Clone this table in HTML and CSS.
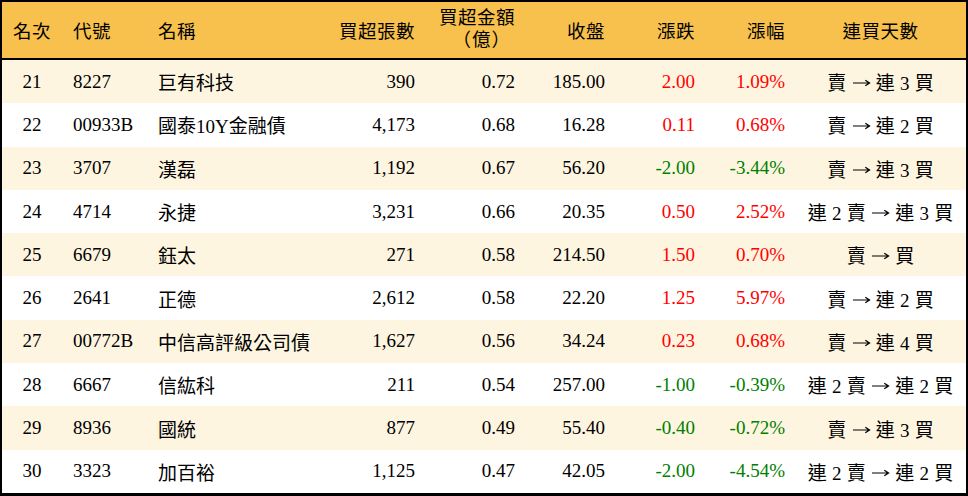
FILE: index.html
```html
<!DOCTYPE html>
<html lang="zh-Hant">
<head>
<meta charset="utf-8">
<link rel="stylesheet" href="styles.css">
</head>
<body>
<div class="table">
  <div class="row head">
    <div class="c c1">名次</div>
    <div class="c cl">代號</div>
    <div class="c cl">名稱</div>
    <div class="c cr">買超張數</div>
    <div class="c cr two"><span>買超金額</span><span class="paren">（億）</span></div>
    <div class="c cr">收盤</div>
    <div class="c cr">漲跌</div>
    <div class="c cr">漲幅</div>
    <div class="c cc">連買天數</div>
  </div>
  <div class="row alt">
    <div class="c c1">21</div><div class="c cl">8227</div><div class="c cl">巨有科技</div>
    <div class="c cr">390</div><div class="c cr">0.72</div><div class="c cr">185.00</div>
    <div class="c cr up">2.00</div><div class="c cr up">1.09%</div><div class="c cc">賣 <svg class="arr" viewBox="0 0 20 10"><path d="M1 5H18.5M14 2L18.5 5L14 8"/></svg> 連 3 買</div>
  </div>
  <div class="row">
    <div class="c c1">22</div><div class="c cl">00933B</div><div class="c cl">國泰10Y金融債</div>
    <div class="c cr">4,173</div><div class="c cr">0.68</div><div class="c cr">16.28</div>
    <div class="c cr up">0.11</div><div class="c cr up">0.68%</div><div class="c cc">賣 <svg class="arr" viewBox="0 0 20 10"><path d="M1 5H18.5M14 2L18.5 5L14 8"/></svg> 連 2 買</div>
  </div>
  <div class="row alt">
    <div class="c c1">23</div><div class="c cl">3707</div><div class="c cl">漢磊</div>
    <div class="c cr">1,192</div><div class="c cr">0.67</div><div class="c cr">56.20</div>
    <div class="c cr down">-2.00</div><div class="c cr down">-3.44%</div><div class="c cc">賣 <svg class="arr" viewBox="0 0 20 10"><path d="M1 5H18.5M14 2L18.5 5L14 8"/></svg> 連 3 買</div>
  </div>
  <div class="row">
    <div class="c c1">24</div><div class="c cl">4714</div><div class="c cl">永捷</div>
    <div class="c cr">3,231</div><div class="c cr">0.66</div><div class="c cr">20.35</div>
    <div class="c cr up">0.50</div><div class="c cr up">2.52%</div><div class="c cc">連 2 賣 <svg class="arr" viewBox="0 0 20 10"><path d="M1 5H18.5M14 2L18.5 5L14 8"/></svg> 連 3 買</div>
  </div>
  <div class="row alt">
    <div class="c c1">25</div><div class="c cl">6679</div><div class="c cl">鈺太</div>
    <div class="c cr">271</div><div class="c cr">0.58</div><div class="c cr">214.50</div>
    <div class="c cr up">1.50</div><div class="c cr up">0.70%</div><div class="c cc">賣 <svg class="arr" viewBox="0 0 20 10"><path d="M1 5H18.5M14 2L18.5 5L14 8"/></svg> 買</div>
  </div>
  <div class="row">
    <div class="c c1">26</div><div class="c cl">2641</div><div class="c cl">正德</div>
    <div class="c cr">2,612</div><div class="c cr">0.58</div><div class="c cr">22.20</div>
    <div class="c cr up">1.25</div><div class="c cr up">5.97%</div><div class="c cc">賣 <svg class="arr" viewBox="0 0 20 10"><path d="M1 5H18.5M14 2L18.5 5L14 8"/></svg> 連 2 買</div>
  </div>
  <div class="row alt">
    <div class="c c1">27</div><div class="c cl">00772B</div><div class="c cl">中信高評級公司債</div>
    <div class="c cr">1,627</div><div class="c cr">0.56</div><div class="c cr">34.24</div>
    <div class="c cr up">0.23</div><div class="c cr up">0.68%</div><div class="c cc">賣 <svg class="arr" viewBox="0 0 20 10"><path d="M1 5H18.5M14 2L18.5 5L14 8"/></svg> 連 4 買</div>
  </div>
  <div class="row">
    <div class="c c1">28</div><div class="c cl">6667</div><div class="c cl">信紘科</div>
    <div class="c cr">211</div><div class="c cr">0.54</div><div class="c cr">257.00</div>
    <div class="c cr down">-1.00</div><div class="c cr down">-0.39%</div><div class="c cc">連 2 賣 <svg class="arr" viewBox="0 0 20 10"><path d="M1 5H18.5M14 2L18.5 5L14 8"/></svg> 連 2 買</div>
  </div>
  <div class="row alt">
    <div class="c c1">29</div><div class="c cl">8936</div><div class="c cl">國統</div>
    <div class="c cr">877</div><div class="c cr">0.49</div><div class="c cr">55.40</div>
    <div class="c cr down">-0.40</div><div class="c cr down">-0.72%</div><div class="c cc">賣 <svg class="arr" viewBox="0 0 20 10"><path d="M1 5H18.5M14 2L18.5 5L14 8"/></svg> 連 3 買</div>
  </div>
  <div class="row">
    <div class="c c1">30</div><div class="c cl">3323</div><div class="c cl">加百裕</div>
    <div class="c cr">1,125</div><div class="c cr">0.47</div><div class="c cr">42.05</div>
    <div class="c cr down">-2.00</div><div class="c cr down">-4.54%</div><div class="c cc">連 2 賣 <svg class="arr" viewBox="0 0 20 10"><path d="M1 5H18.5M14 2L18.5 5L14 8"/></svg> 連 2 買</div>
  </div>
</div>
</body>
</html>
```
FILE: styles.css
```css
html, body {
  margin: 0;
  padding: 0;
  background: #ffffff;
}
.table {
  width: 968px;
  height: 496px;
  box-sizing: border-box;
  border-style: solid;
  border-color: #000;
  border-width: 2px 2px 3px 2px;
  display: grid;
  grid-template-rows: 58px repeat(10, 1fr);
  font-family: "Liberation Serif", "Noto Sans CJK TC", serif;
  font-size: 19px;
  color: #000;
}
.row {
  display: grid;
  grid-template-columns: 60px 85px 185px 93px 100px 90px 90px 90px 171px;
  align-items: center;
  background: #ffffff;
}
.row.alt {
  background: #fef5e1;
}
.row.head {
  background: #f8c04c;
  border-bottom: 2px solid #000;
  font-size: 18.5px;
  letter-spacing: 0.5px;
}
.c {
  white-space: nowrap;
}
.c1 {
  text-align: center;
}
.cl {
  padding-left: 11px;
}
.cr {
  text-align: right;
  padding-right: 10px;
}
.cc {
  text-align: center;
  word-spacing: 0.5px;
}
.two {
  display: flex;
  flex-direction: column;
  align-items: flex-end;
  line-height: 22px;
  margin-top: -2px;
}
.paren {
  padding-right: 4px;
  letter-spacing: 1px;
}
.arr {
  width: 19px;
  height: 10px;
  vertical-align: 2px;
  fill: none;
  stroke: #000;
  stroke-width: 1.3;
}
.up {
  color: #ff0000;
}
.down {
  color: #008000;
}
```
